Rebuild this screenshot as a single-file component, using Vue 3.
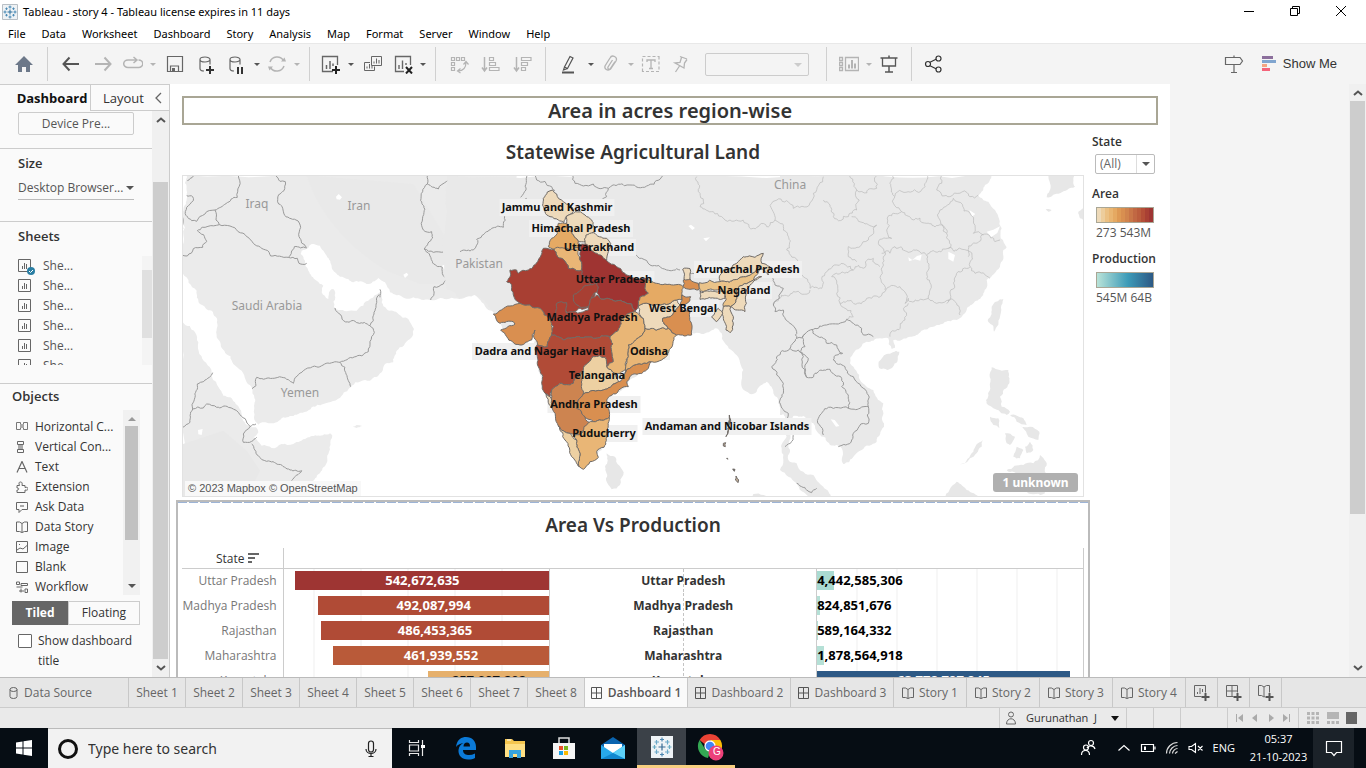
<script setup>
import { h, ref } from 'vue'

/* Icon set: each icon is [width, height, [[path, fill, stroke, strokeWidth], ...]] */
const D = '#555'
const L = '#b4b4b4'
const cyl = 'M3 5.5a5 2.5 0 0 1 10 0v5M3 5.5a5 2.5 0 0 0 10 0M3 5.5v9a4 2.5 0 0 0 4 2.5'
const icons = {
  logo: [16, 16, [['M.5.5h15v15H.5z', '#eef2f5', '#b8bfc5', 1], ['M8 5.5v5M5.5 8h5', 'none', '#2a6f9c', 1], ['M8 1.5v3M6.5 3h3M8 11.5v3M6.5 13h3M3 6.5v3M1.5 8h3M13 6.5v3M11.5 8h3M4.5 3.5v2.4M3.3 4.7h2.4M11.5 3.5v2.4M10.3 4.7h2.4M4.5 10v2.4M3.3 11.2h2.4M11.5 10v2.4M10.3 11.2h2.4', 'none', '#4a8ab5', 1]]],
  home: [20, 20, [['M10 2 19 11h-3v7h-4v-5H8v5H4v-7H1z', '#6c7889', 'none', 0]]],
  back: [20, 20, [['M2.5 10H18M8.5 3.5 2.5 10l6 6.5', 'none', D, 2]]],
  fwd: [20, 20, [['M2 10h15.5M11.5 3.5l6 6.5-6 6.5', 'none', L, 2]]],
  loop: [20, 20, [['M15.5 6a4 3.5 0 0 1 0 7.5H5a4 3.5 0 0 1 0-7.5h8.5M10.5 3l3.5 3-3.5 3', 'none', L, 1.5]]],
  save: [20, 20, [['M2.5 2.5h15v15h-15zM5.5 17v-5h8v5', 'none', '#666', 1.2], ['M7 14h3v3H7z', '#666', 'none', 0]]],
  dsAdd: [20, 20, [[cyl, 'none', '#666', 1.2], ['M13 12v8M9 16h8', 'none', '#333', 2]]],
  dsPause: [20, 20, [[cyl, 'none', '#666', 1.2], ['M11 13v7M15 13v7', 'none', '#333', 2]]],
  refresh: [20, 20, [['M3 8a7.5 7.5 0 0 1 13.5-1.5M17 12a7.5 7.5 0 0 1-13.5 1.5', 'none', L, 1.5], ['M14 7.5h5l-1.5-4zM6 12.5H1l1.5 4z', L, 'none', 0]]],
  wsAdd: [20, 20, [['M12 17.5H1.5v-15h15V11', 'none', '#666', 1.3], ['M5.5 15v-4M9 15V7M12 12V9.5', 'none', '#666', 1.5], ['M15 12v8M11 16h8', 'none', '#222', 2]]],
  dup: [20, 20, [['M8.5 2.5h10v9h-10zM7 8.5H1.5v8h10v-4', 'none', '#666', 1], ['M11 9.5v-2M13.5 9.5v-5M16 9.5V6M4 14.5v-2M6.5 14.5V10M9 14.5v-3', 'none', '#666', 1]]],
  clear: [20, 20, [['M11 17.5H2.5v-15h15V11', 'none', '#666', 1.3], ['M6 15v-4M9.5 15V6.5M13 11V9', 'none', '#666', 1.4], ['m13 13 6 6.5M19 13l-6 6.5', 'none', '#222', 2]]],
  swap: [20, 20, [['M2.5 3.5h3v3h-3zM7.5 3.5h3v3h-3zM12.5 3.5h3v3h-3zM2.5 8.5h3v3h-3zM2.5 13.5h3v3h-3z', 'none', L, 1.2], ['M17 8c0 6-3 9-8 9M14.5 10.5 17 7.5l2.5 3M11.5 14.5l-3 2.5 3 2', 'none', L, 1.2]]],
  asc: [20, 20, [['M3.5 3v14M1 13.5 3.5 17 6 13.5', 'none', L, 1.5], ['M8.5 3.5h4v3h-4zM8.5 8.5h6v3h-6zM8.5 13.5h9.5v3H8.5z', 'none', L, 1.2]]],
  desc: [20, 20, [['M3.5 3v14M1 13.5 3.5 17 6 13.5', 'none', L, 1.5], ['M8.5 3.5H18v3H8.5zM8.5 8.5h6v3h-6zM8.5 13.5h4v3h-4z', 'none', L, 1.2]]],
  marker: [20, 20, [['M11 2.5 14 4 8.5 14.5l-3-1.5zM5.5 13 4.5 16l4-1.5', 'none', D, 1.2], ['M3 18.5h12', 'none', D, 2]]],
  clip: [20, 20, [['M14 7.5 9 15a3 3 0 0 1-5-3l5-8a3 3 0 0 1 6 3l-5 7.5a1.5 1.5 0 0 1-3-1.5l4.5-7', 'none', L, 1.3]]],
  textBox: [20, 20, [['M1.5 2.5h3M6.5 2.5h3M11.5 2.5h3M16.5 2.5h1.5v3M18 7.5v3M18 12.5v3M18 17.5h-3M13 17.5h-3M8 17.5H5M3 17.5H1.5v-3M1.5 12.5v-3M1.5 7.5v-3', 'none', L, 1.2], ['M6 8V6h8v2M10 6v8.5M8 14.5h4', 'none', L, 1.3]]],
  pin: [20, 20, [['M9 2.5 16 5M10.5 3.5 9 8.5 4 9l9 5 .5-5L16 5.5M8.5 12 4.5 18', 'none', L, 1.3]]],
  cards: [20, 20, [['M.5 3.5h3v3h-3zM.5 8.5h3v3h-3zM.5 13.5h3v3h-3zM6.5 3.5h13v13h-13z', 'none', L, 1.3], ['M10 14.5v-4M13 14.5V6M16 14.5v-5', 'none', L, 2]]],
  present: [20, 20, [['M1.5 4h17M10 1.5V4M10 12v6M6 18h8', 'none', D, 1.5], ['M3.5 4v8h13V4', 'none', D, 1.3]]],
  share: [20, 20, [['M5.5 8.5 12.5 5M5.5 11.5l7 3.5', 'none', '#333', 1.2], ['M1.5 10a2.5 2.5 0 1 0 5 0 2.5 2.5 0 1 0-5 0M12 4.5a2.5 2.5 0 1 0 5 0 2.5 2.5 0 1 0-5 0M12 15.5a2.5 2.5 0 1 0 5 0 2.5 2.5 0 1 0-5 0', '#f4f4f4', '#333', 1.2]]],
  sign: [20, 20, [['M1.5 3.5H16l2.5 3.500-2.500 3.500H1.500zM10 1.500v2M10 10.500v8M7 18.500h6', 'none', '#666', 1.2]]],
  showMe: [16, 16, [['M1 0h11v3H1z', '#8c6f9c', 'none', 0], ['M1 4h14v3H1z', '#80a5cf', 'none', 0], ['M1 8h5v3H1z', '#f4a582', 'none', 0], ['M1 12h8v3H1z', '#f4647a', 'none', 0]]],
  min: [12, 12, [['M1 6.5h10', 'none', '#000', 1]]],
  restore: [12, 12, [['M1.5 3.5h7v7h-7zM3.5 3.5v-2h7v7h-2', 'none', '#000', 1]]],
  close: [12, 12, [['m1 1 10 10M11 1 1 11', 'none', '#000', 1]]],
  up: [10, 6, [['m1 5 4-3.5L9 5', 'none', D, 2]]],
  down: [10, 6, [['m1 1 4 3.5L9 1', 'none', D, 2]]],
  tri: [8, 4, [['M0 0h8L4 4z', D, 'none', 0]]],
  triBlack: [8, 5, [['M0 0h8L4 5z', '#111', 'none', 0]]],
  triUp: [8, 4, [['M0 4h8L4 0z', '#999', 'none', 0]]],
  collapse: [8, 12, [['M7 1 2 6l5 5', 'none', '#666', 1.3]]],
  sheet: [14, 14, [['M.5.5h12v12H.5z', 'none', '#666', 1], ['M4.5 10V7M6.5 10V4M8.500 10V5', 'none', '#666', 1]]],
  check: [8, 8, [['M0 4a4 4 0 1 0 8 0 4 4 0 1 0-8 0', '#2a7ea3', 'none', 0], ['m2 4 1.5 1.5L6 3', 'none', '#fff', 1]]],
  hCont: [12, 12, [['M.5 1.5h4v7h-4zM7.5 1.5h4v7h-4z', 'none', '#777', 1], ['M4 3h4v4H4z', '#aaa', 'none', 0]]],
  vCont: [12, 12, [['M1.5.5h6v3h-6zM1.5 8.5h6v3h-6z', 'none', '#666', 1], ['M2 4h5v4H2z', '#aaa', 'none', 0]]],
  aText: [12, 12, [['M1 11.5 6 .5l5 11M3 7.5h6', 'none', '#666', 1.2]]],
  puzzle: [12, 12, [['M1 4.5h2.5C2.5 2 3 1 4.5 1S6.5 2 6 4.5h3v2c2-.5 3 0 3 1.2S11 9.5 9 9v2.5H1V9c2 .5 2.5-2.5 0-2z', 'none', '#666', 1]]],
  ask: [12, 12, [['M.5 1.5h11v7H6l-3 3v-3H.5z', 'none', '#666', 1], ['M4 4h4v2H4z', '#aaa', 'none', 0]]],
  book: [12, 12, [['M.5 1h3L6 2.500 8.500 1h3v9.500h-3L6 11.500 3.500 10.500h-3zM6 2.500v9', 'none', '#666', 1]]],
  image: [12, 12, [['M.5.5h11v11H.5z', 'none', '#666', 1], ['m1 9 3-2 3 1 4-3.5M3 3.5h1', 'none', '#666', 1]]],
  blank: [12, 12, [['M.5.5h11v11H.5z', 'none', '#666', 1]]],
  flow: [12, 12, [['M.5 1h3v2.5h-3zM5 2.5h6.5v2H5zM.5 6h6M3 10h5M9 8h2.5v3.500H9zM5 7.5v4', 'none', '#666', 1]]],
  grid: [12, 12, [['M.5.5h10v11H.5zM5.5 1v10M.5 6h10', 'none', '#555', 1]]],
  data: [10, 12, [['M1 2.5a3.5 2 0 0 1 7 0v7a3.5 2 0 0 1-7 0zM1 2.5a3.5 2 0 0 0 7 0', 'none', '#666', 1]]],
  newSheet: [18, 18, [['M8.5 12.5h-7v-11h11v7', 'none', '#666', 1], ['M4.5 10V8M7 10V4M9.5 8V5', 'none', '#666', 1], ['M12.5 9v8M8.5 13h8', 'none', D, 2]]],
  newDash: [18, 18, [['M8.5 12.5h-7v-11h11v7M7 1.5v11M1.5 7h11', 'none', '#666', 1], ['M12.5 9v8M8.5 13h8', 'none', D, 2]]],
  newStory: [18, 18, [['M8 12.500 7 13l-2.500-1.500h-3v-10h3L7 3l2.500-1.500h3v7M7 3v9.500', 'none', '#666', 1], ['M12.5 9v8M8.5 13h8', 'none', D, 2]]],
  user: [12, 14, [['M3.5 3.5a2.5 2.5 0 1 0 5 0 2.5 2.5 0 1 0-5 0M1.5 13c0-7 9-7 9 0z', 'none', '#666', 1]]],
  sort: [12, 10, [['M0 1h11M0 5h7M0 9h4', 'none', '#666', 2]]],
  first: [8, 8, [['M0 0h1v8H0zM7 0v8L2 4z', '#aaa', 'none', 0]]],
  prev: [8, 8, [['M6 0v8L1 4z', '#aaa', 'none', 0]]],
  next: [8, 8, [['M2 0v8l5-4z', '#aaa', 'none', 0]]],
  last: [8, 8, [['M7 0h1v8H7zM1 0v8l5-4z', '#aaa', 'none', 0]]],
  tiles: [12, 12, [['M0 0h3v3H0zM4.5 0h3v3h-3zM9 0h3v3H9zM0 4.5h3v3H0zM4.5 4.5h3v3h-3zM9 4.5h3v3H9zM0 9h3v3H0zM4.5 9h3v3h-3zM9 9h3v3H9z', '#b5b5b5', 'none', 0]]],
  strip: [12, 12, [['M0 0h12v7H0zM0 9h3v3H0zM4.5 9h3v3h-3zM9 9h3v3H9z', '#b5b5b5', 'none', 0]]],
  full: [12, 12, [['M0 0h11v12H0z', '#666', 'none', 0]]],
  win: [18, 18, [['M1 3.5 7.5 2.5v6H1zM8.500 2.300 17 1v7.500H8.500zM1 9.500h6.500v6L1 14.500zM8.500 9.500H17V17l-8.500-1.300z', '#fff', 'none', 0]]],
  cortana: [22, 22, [['M2.5 11a8.500 8.500 0 1 0 17 0 8.500 8.500 0 1 0-17 0', 'none', '#111', 3]]],
  mic: [14, 18, [['M4.5 3.5a2.5 2.5 0 0 1 5 0v6a2.5 2.5 0 0 1-5 0zM2 9c0 6 10 6 10 0M7 13.5V17M4.5 16.5h5', 'none', '#222', 1.2]]],
  task: [18, 18, [['M1.5 1v2.5h9V1M1.5 6h9v6h-9zM1.5 17v-2.5h9V17M14.5 1v16', 'none', '#e8e8e8', 1.2], ['M13 6h4v3h-4z', '#fff', 'none', 0]]],
  edge: [24, 24, [['M2 11C3 3 8 1 12 1c6 0 10 4 10 10v3H9c0 4 3 5 6 5 2 0 4-.5 6-1.5v4.5c-2 1-4 1.5-7 1.5-6 0-10-4-9.5-9.5C5 10 7 8 9.5 7 6.5 7.3 4 8.5 2 11zM9.5 10.500H16C16 8 15 6.500 13 6.500S9.500 8 9.500 10.500z', '#0b7ad8', 'none', 0]]],
  files: [24, 24, [['M2 3h7l2 2h11v16H2z', '#f5c64f', 'none', 0], ['M2 8h20v13H2z', '#ffdf83', 'none', 0], ['M6 22v-8h12v8h-4v-4h-4v4z', '#36a3de', 'none', 0], ['M4 4h4', 'none', '#fff', 1]]],
  store: [24, 24, [['M7 7V2h10v5', 'none', '#ddd', 1.5], ['M1 7h22v16H1z', '#f5f5f5', 'none', 0], ['M7 10h4v4H7z', '#e8502a', 'none', 0], ['M12 10h4v4h-4z', '#7ab51d', 'none', 0], ['M7 15h4v4H7z', '#18a0e4', 'none', 0], ['M12 15h4v4h-4z', '#fab800', 'none', 0]]],
  mail: [26, 24, [['M1 9 13 1l12 8v14H1z', '#0a64b0', 'none', 0], ['M4 8h18v9H4z', '#fff', 'none', 0], ['M1 9v14h24V9l-12 8z', '#27a8ea', 'none', 0], ['m25 9-12 8 12 6z', '#5cd0f8', 'none', 0], ['M13 17 1 23h24z', '#1187cf', 'none', 0]]],
  tableau: [24, 24, [['M1 1h22v22H1z', '#eef3f6', 'none', 0], ['M12 8.5v7M8.5 12h7', 'none', '#376b93', 1.2], ['M12 2.5v4M10 4.5h4M12 17.5v4M10 19.5h4', 'none', '#4b86b0', 1.2], ['M4.5 10v4M2.5 12h4M19.5 10v4M17.5 12h4', 'none', '#68acc5', 1.2], ['M6.5 5v4.5M4.5 7h4.5M17.5 5v4.5M15 7h4.5M6.5 14.5V19M4.5 17h4.5M17.5 14.5V19M15 17h4.5', 'none', '#6ba8c8', 1.2]]],
  chrome: [28, 28, [['M13 1a12 12 0 0 1 10.4 6H13L7.5 11 2.6 7A12 12 0 0 1 13 1z', '#ea4335', 'none', 0], ['M2.6 7 8 16l5 3-2 6A12 12 0 0 1 2.6 7z', '#34a853', 'none', 0], ['M23.4 7H13l5 5v6l-5 7A12 12 0 0 0 23.4 7z', '#fbbc05', 'none', 0], ['M8 13a5 5 0 1 0 10 0 5 5 0 1 0-10 0', '#4285f4', '#fff', 1.3], ['M11.5 20a7.5 7.5 0 1 0 15 0 7.5 7.5 0 1 0-15 0', '#ec407a', 'none', 0]]],
  people: [18, 18, [['M8.5 4a2.5 2.5 0 1 0 5 0 2.5 2.5 0 1 0-5 0M7 9c1-3 7-3 8 1M3.5 8.5a2.5 2.5 0 1 0 5 0 2.5 2.5 0 1 0-5 0M1.5 16c0-6 8-6 8 0', 'none', '#fff', 1.2]]],
  trayUp: [14, 14, [['m1.5 9.5 5.5-5 5.5 5', 'none', '#fff', 1.2]]],
  battery: [16, 12, [['M1.5 2.5h12v7h-12zM15 4.5v3', 'none', '#fff', 1.2], ['M4 4.5h2v3.5H4z', '#fff', 'none', 0]]],
  wifi: [14, 14, [['M1.5 12.5c0-6 5-11 11-11M4.5 12.5c0-4 4-8 8-8M7.5 12.5c0-2.5 2.5-5 5-5M10 12.5l2.5-2', 'none', '#ddd', 1.2]]],
  mute: [16, 12, [['M1 4.5h2.5l4-3v9l-4-3H1zM10 4l4.5 4.5M14.5 4 10 8.5', 'none', '#fff', 1.1]]],
  note: [18, 18, [['M1.5 2.5h15v11h-5l-2.5 3-2.5-3h-5z', 'none', '#fff', 1.2]]]
}
const Glyph = (p) => {
  const [w, ht, parts] = icons[p.name]
  return h('svg', { width: w, height: ht, viewBox: `0 0 ${w} ${ht}`, 'aria-hidden': 'true' },
    parts.map(([d, fill, stroke, sw]) => h('path', { d, fill, stroke, 'stroke-width': sw })))
}
Glyph.props = ['name']

const menus = ['File', 'Data', 'Worksheet', 'Dashboard', 'Story', 'Analysis', 'Map', 'Format', 'Server', 'Window', 'Help']
const toolGroups = [
  [['back', 'Undo'], ['fwd', 'Redo'], ['loop', 'Replay', 1], ['save', 'Save'], ['dsAdd', 'New data source'], ['dsPause', 'Pause updates', 1], ['refresh', 'Refresh', 1]],
  [['wsAdd', 'New worksheet', 1], ['dup', 'Duplicate'], ['clear', 'Clear sheet', 1]],
  [['swap', 'Swap'], ['asc', 'Sort ascending'], ['desc', 'Sort descending']]
]
const faded = ['loop', 'refresh', 'clip', 'cards']
const sheets = [1, 2, 3, 4, 5, 6]
const objects = [['hCont', 'Horizontal C...'], ['vCont', 'Vertical Con...'], ['aText', 'Text'], ['puzzle', 'Extension'], ['ask', 'Ask Data'], ['book', 'Data Story'], ['image', 'Image'], ['blank', 'Blank'], ['flow', 'Workflow']]
const showTitle = ref(false)

const rows = [
  { s: 'Uttar Pradesh', a: '542,672,635', w: 95.5, c: '#9e3533', p: '4,442,585,306', pw: 6.5, pc: '#aadbd2' },
  { s: 'Madhya Pradesh', a: '492,087,994', w: 87, c: '#b04b36', p: '824,851,676', pw: 1, pc: '#b5e0d6' },
  { s: 'Rajasthan', a: '486,453,365', w: 86, c: '#b04b36', p: '589,164,332', pw: .5, pc: '#b5e0d6' },
  { s: 'Maharashtra', a: '461,939,552', w: 81.5, c: '#b95a39', p: '1,878,564,918', pw: 2.5, pc: '#b5e0d6' },
  { s: 'Karnataka', a: '257,097,202', w: 45.5, c: '#e6b06c', dark: true, p: '63,772,797,945', pw: 95, pc: '#2d5985', big: true }
]
const areaSwatches = ['#eedab9', '#edcd9c', '#ebc083', '#e9b571', '#e5a962', '#de9a55', '#d88f50', '#d0844d', '#c97648', '#c16843', '#bb5d3d', '#b44e37', '#a94034', '#9e3533']

/* Splits every segment of a polyline with a repeatable offset so that shared edges meet. */
function jag(text, closed, rough = 0.16) {
  const n = text.trim().split(/[ ,]+/).map(Number)
  const pts = []
  for (let i = 0; i < n.length; i += 2) pts.push([n[i], n[i + 1]])
  if (closed) pts.push(pts[0])
  const out = [pts[0]]
  const split = (a, b, depth) => {
    const len = Math.hypot(b[0] - a[0], b[1] - a[1])
    if (len < 9 || depth > 3) { out.push(b); return }
    const seed = Math.sin((a[0] + b[0]) * 12.9 + (a[1] + b[1]) * 78.2) * 43758.5
    const k = (seed - Math.floor(seed) - 0.5) * Math.min(len, 40) * rough * 2
    const flip = a[0] < b[0] || (a[0] === b[0] && a[1] < b[1]) ? 1 : -1
    const m = [(a[0] + b[0]) / 2 - (b[1] - a[1]) / len * k * flip, (a[1] + b[1]) / 2 + (b[0] - a[0]) / len * k * flip]
    split(a, m, depth + 1)
    split(m, b, depth + 1)
  }
  for (let i = 1; i < pts.length; i++) split(pts[i - 1], pts[i], 0)
  return 'M' + out.map((q) => q[0].toFixed(1) + ' ' + q[1].toFixed(1)).join('L') + (closed ? 'Z' : '')
}

const westLand = [
  '20,274 1010,274 1010,760 960,700 945,685 925,678 905,655 890,632 860,638 800,646 750,648 700,640 650,634 630,625 615,595 595,582 560,600 520,595 505,585 480,578 455,550 440,515 420,485 395,480 385,492 365,500 362,510 375,530 385,560 410,590 430,605 425,625 445,645 450,620 460,615 466,640 462,668 475,678 500,682 530,680 550,665 570,645 600,625 605,655 620,675 655,690 685,705 702,735 690,765 650,800 640,835 615,840 605,865 570,890 515,905 485,935 430,960 395,970 350,992 310,1000 270,1018 235,1022 222,1000 218,930 215,910 185,860 160,840 110,760 112,720 95,680 60,660 50,620 8,568 8,385 18,360 20,320',
  '8,714 45,745 55,775 58,810 95,865 110,900 130,935 165,955 185,990 205,1025 228,1030 235,1045 220,1060 245,1085 275,1092 305,1080 340,1080 380,1062 450,1048 457,1055 445,1110 430,1150 410,1180 390,1215 370,1242 8,1242',
  '518,1028 530,1023 547,1026 530,1032'
]
const westLines = [
  '175,274 172,340 105,378 50,412 35,410 20,395', '105,378 108,408 118,422 52,440 80,472 68,490 40,494 22,516 8,514', '118,422 150,426 200,458 272,516 325,520 352,523 357,538 380,538', '325,520 343,488 380,492',
  '288,274 300,292 316,293 312,320 296,332 296,360 312,390 348,408 362,430 357,458 380,490', '742,274 742,300 722,350 732,385 730,438 755,443 758,462 733,495 760,505 826,510 886,493 890,460 930,440 960,432', '742,300 775,315 800,292 838,274',
  '733,495 748,510 757,532 787,550 790,575 800,585 790,600 762,608 752,648', '465,672 497,714 570,725 583,745 565,803 480,835 398,848 370,860 340,898 325,887 240,884 230,880 228,905 216,914', '480,835 512,908', '570,725 582,690 590,650 598,632', '600,616 600,640',
  '98,866 88,880 52,900 45,940 36,962 38,975 30,1015 8,1030', '38,975 70,972 80,960 110,970 145,970 175,985 210,1028 228,1020', '210,1028 190,1050 190,1075 215,1072 230,1060', '215,1080 235,1115 260,1132 330,1158 365,1160 335,1190', '8,400 8,435', '22,290 40,276', '20,335 38,338 40,350 20,370 18,395'
]
const eastLand = [
  '-40,15 1140,15 1140,735 1000,738 995,780 985,820 985,870 1010,880 1030,905 1060,915 1090,950 1115,985 1060,985 1035,970 1010,940 985,920 960,900 970,870 965,840 980,800 975,740 955,700 940,670 920,635 890,665 870,672 845,650 850,600 820,545 795,520 785,490 765,475 725,492 695,490 650,495 632,535 570,575 500,650 440,690 445,750 432,832 365,895 300,770 270,680 235,590 225,500 180,525 130,480 105,430 90,415 75,395 45,375 0,385 -40,360',
  '960,15 1595,15 1575,45 1555,75 1585,95 1605,120 1625,175 1622,205 1640,232 1630,240 1620,290 1580,330 1570,370 1520,420 1490,450 1420,470 1350,500 1300,510 1305,533 1295,537 1285,505 1260,505 1220,515 1180,550 1170,580 1200,630 1240,660 1270,700 1272,770 1250,815 1205,840 1150,882 1145,835 1110,825 1075,790 1060,760 1030,738 960,735',
  '440,850 465,860 490,915 480,945 455,958 438,930 435,890', '1256,575 1280,552 1318,545 1312,575 1282,600 1258,595', '1630,387 1620,440 1602,485 1583,450 1595,410 1620,388',
  '1595,592 1645,600 1648,640 1620,680 1625,710 1650,725 1640,735 1600,715 1578,690 1590,650', '1765,15 1845,15 1845,50 1800,70 1760,82 1770,40', '1450,985 1490,935 1520,960 1560,985', '1500,885 1540,845 1568,810 1565,830 1530,865', '1590,740 1615,745 1618,775 1600,765', '1635,790 1665,800 1650,825 1640,820', '1640,900 1690,885 1720,880 1740,855 1758,875 1760,920 1755,970 1700,965 1680,920', '1680,765 1710,770 1738,785 1735,810 1705,800', '1650,735 1690,745 1700,765 1670,755', '1670,830 1690,840 1680,865 1660,860', '1710,815 1720,840 1700,850 1695,830', '1855,125 1868,115 1870,150 1860,145', '1757,118 1775,120 1765,125', '870,985 880,972 940,985'
]
const eastLines = [
  '200,15 198,60 182,82', '0,245 40,240 50,208 80,185 95,175 130,172 140,130 200,85', '225,15 230,30 275,50 285,62', '338,15 345,40 370,48 400,42 445,55 440,80 400,100', '445,55 510,45 560,48 600,28 610,15', '450,220 500,245 545,265 570,285 620,300 660,300', '690,310 760,315 785,325', '925,315 945,345 970,355 958,385 940,405 945,425 970,420 990,460 1010,485 1010,505 990,535 950,560 935,590 950,615 970,640 970,670 960,690 985,730 990,760 1000,790 975,830',
  '1010,505 1035,492 1060,478 1100,465 1135,462 1160,448 1180,460 1205,475 1210,495 1240,500', '1055,478 1090,505 1100,520 1130,525 1148,550 1120,570 1155,590 1180,620 1220,665 1225,710 1225,760 1180,790 1175,810 1135,830', '1035,492 1030,515 1035,530 1020,545 1045,565 1040,622 1075,605 1110,598 1145,625 1145,650 1165,680 1165,715 1200,715 1225,710', '1165,715 1105,712 1075,745 1090,795', '1010,940 1025,950 1040,960 1055,968 1070,955', '990,535 1015,540 1030,560 1040,622'
]
const provinces = [
  '710,20 720,110 760,125 810,150 860,160 880,175 920,170 945,150 935,100 980,92 1000,115 1050,98 1060,70 1090,20', '945,150 970,170 980,240 1015,280 1020,310 1050,355 1085,355 1095,310 1130,285 1180,300 1240,265 1260,290', '1090,90 1110,105 1120,140 1165,140 1190,120 1190,60 1160,15', '1190,60 1250,55 1250,15', '1300,15 1305,80 1325,125 1300,130 1280,180 1295,205 1255,220 1270,260 1275,360', '1305,78 1395,50 1400,15', '1325,125 1355,148 1400,160 1460,190 1465,235 1400,255 1370,240 1305,230 1265,250', '1175,140 1250,165 1225,210 1200,230 1165,230 1165,260 1190,275', '1400,255 1405,300 1410,360 1405,385 1345,385 1335,400 1320,350 1275,365 1220,385 1140,400 1130,340 1115,320 1180,300', '1140,400 1155,415 1180,440 1160,448', '1345,400 1335,450 1290,500', '1405,385 1430,400 1490,400 1500,435', '1460,400 1490,310 1530,290 1530,245 1465,235', '1530,290 1545,310 1590,325', '1525,260 1565,195 1620,210', '1460,190 1440,150 1440,120 1480,85 1530,130 1540,190 1570,195', '1430,60 1470,80 1530,80 1555,75', '1430,60 1450,15', '940,405 1000,365 1050,360'
]
const states = [
  ['#eedabb', '250,85 262,66 278,60 290,72 310,95 330,105 340,125 320,138 312,158 295,150 270,140 255,125'],
  ['#eedabb', '320,138 345,125 375,135 395,150 405,185 385,195 375,215 355,215 340,195 320,160'],
  ['#eedabb', '378,195 400,188 440,205 452,220 445,245 440,272 420,262 400,245 375,220'],
  ['#e5aa64', '295,160 320,160 340,195 355,215 358,235 330,240 290,238 265,230 275,205 292,190'],
  ['#e9b676', '282,238 330,240 358,235 360,270 365,300 350,302 325,295 310,268 290,255'],
  ['#a83f33', '250,235 282,238 290,255 310,268 325,295 350,302 365,300 385,330 410,345 405,370 395,410 320,430 300,400 285,440 270,450 240,415 210,405 180,400 160,375 155,345 140,335 150,300 170,300 175,310 205,300 235,270'],
  ['#9f3432', '358,225 378,222 400,245 440,272 470,290 510,318 555,325 555,355 565,370 540,382 535,408 525,425 515,402 460,392 420,385 400,350 370,320 365,300 360,270'],
  ['#a83f33', '340,375 370,350 410,338 412,365 395,380 390,410 350,405 340,390'],
  ['#ab4133', '270,450 285,440 290,400 320,398 320,430 385,420 390,390 410,375 420,385 460,392 515,402 525,425 495,440 480,470 462,490 450,500 400,505 350,500 310,510 275,495 280,470'],
  ['#d98f50', '100,432 150,408 180,400 210,405 240,415 270,450 275,495 262,530 232,525 225,480 215,510 180,525 140,500 122,480 165,462 160,455 120,460'],
  ['#b14b37', '262,530 275,495 310,510 350,500 400,505 450,500 455,545 460,575 440,590 435,562 400,560 370,600 365,605 340,640 300,640 275,660 270,680 255,670 245,640 240,600 232,560 232,525'],
  ['#eedabb', '258,672 270,680 275,712 268,705'],
  ['#cd8450', '275,660 300,640 340,640 365,605 370,672 355,690 350,715 375,740 395,765 370,780 360,795 330,790 295,768 275,710'],
  ['#edd0a2', '370,600 400,560 435,562 440,590 465,610 480,638 470,638 430,660 370,672'],
  ['#d98f50', '370,672 430,660 470,638 495,610 515,590 575,575 560,600 500,635 505,650 470,670 440,690 440,710 448,742 400,755 375,740 350,715 355,690'],
  ['#e9b676', '400,755 448,742 440,790 432,832 410,845 415,862 390,875 370,898 358,890 360,850 350,810 340,795 370,785 372,770'],
  ['#edd0a2', '295,768 330,790 350,810 360,850 358,890 335,860 315,810'],
  ['#e9b676', '495,440 525,425 550,445 555,475 540,500 505,525 505,560 500,595 480,610 465,610 440,590 460,575 455,545 450,500 462,490 480,470'],
  ['#e9b676', '555,475 590,480 625,475 650,495 632,535 605,570 575,575 515,590 495,610 505,560 505,525 540,500'],
  ['#eedabb', '535,408 600,405 650,390 660,405 640,430 608,445 625,475 590,480 555,475 550,445'],
  ['#e5aa64', '555,325 590,340 640,345 670,350 665,390 650,390 600,405 535,408 540,382 565,370 555,355'],
  ['#d98f50', '670,330 690,327 715,340 715,360 690,358 670,350'],
  ['#d98f50', '665,375 692,380 690,392 660,405 672,422 690,425 695,495 650,495 625,475 608,445 640,430 660,405'],
  ['#eedabb', '668,298 690,296 690,327 672,328'],
  ['#eac389', '718,338 780,335 850,320 895,290 880,330 830,360 825,400 812,410 790,410 795,365 720,365'],
  ['#eedabb', '780,335 790,300 830,280 850,260 885,262 910,250 905,280 930,290 925,315 895,290 850,320'],
  ['#eedabb', '720,368 795,368 795,385 720,388'],
  ['#eedabb', '830,360 880,330 905,320 870,345 858,375 855,425 812,410 825,400'],
  ['#eedabb', '790,410 812,410 820,440 810,488 798,480 790,440'],
  ['#eedabb', '755,440 775,415 788,430 770,455'],
  ['#776b5f', '808,735 812,750 805,785 798,800 802,760'], ['#c0ad98', '790,820 797,818 796,830 790,828'], ['#c0ad98', '828,918 836,930 834,938 826,930'], ['#555555', '818,897 825,898 823,904'], ['#555555', '800,865 803,865 803,868']
]
const stateLabels = [
  ['Jammu and Kashmir', 557, 207, 115], ['Himachal Pradesh', 581, 228, 104], ['Uttarakhand', 599, 247, 74], ['Uttar Pradesh', 614, 279, 81], ['Arunachal Pradesh', 748, 269, 108], ['Nagaland', 744, 290, 56], ['West Bengal', 683, 308, 73], ['Madhya Pradesh', 592, 317, 96], ['Dadra and Nagar Haveli', 540, 351, 136], ['Odisha', 649, 351, 42], ['Telangana', 597, 375, 60], ['Andhra Pradesh', 594, 404, 93], ['Andaman and Nicobar Islands', 727, 426, 169], ['Puducherry', 604, 433, 67]
]
const countryLabels = [['Iraq', 257, 204], ['Iran', 359, 206], ['Pakistan', 479, 264], ['Saudi Arabia', 267, 306], ['Yemen', 300, 393], ['China', 790, 185]]
const books = [['grid', 'Dashboard 2', 'd'], ['grid', 'Dashboard 3', 'd'], ['book', 'Story 1', 's'], ['book', 'Story 2', 's'], ['book', 'Story 3', 's'], ['book', 'Story 4', 's']]
</script>

<template>
  <div class="app">
    <header class="titlebar">
      <Glyph name="logo" /><span class="caption">Tableau - story 4 - Tableau license expires in 11 days</span>
      <div class="winbtns">
        <button aria-label="Minimize"><Glyph name="min" /></button>
        <button aria-label="Restore"><Glyph name="restore" /></button>
        <button aria-label="Close"><Glyph name="close" /></button>
      </div>
    </header>
    <nav class="menubar"><button v-for="m in menus" :key="m">{{ m }}</button></nav>

    <div class="toolbar">
      <button class="home" aria-label="Home"><Glyph name="home" /></button>
      <div v-for="(g, i) in toolGroups" :key="i" class="group">
        <template v-for="t in g" :key="t[0]">
          <button class="tool" :class="{ slim: t[2] }" :aria-label="t[1]"><Glyph :name="t[0]" /></button>
          <button v-if="t[2]" class="caret" :class="{ faded: faded.includes(t[0]) }" :aria-label="t[1] + ' options'"></button>
        </template>
      </div>
      <div class="group">
        <button class="tool" aria-label="Highlight"><Glyph name="marker" /></button><button class="caret" aria-label="Highlight options"></button>
        <button class="tool slim" aria-label="Group"><Glyph name="clip" /></button><button class="caret faded" aria-label="Group options"></button>
        <button class="tool slim" aria-label="Show mark labels"><Glyph name="textBox" /></button>
        <button class="tool" aria-label="Fix axes"><Glyph name="pin" /></button>
        <div class="fit"><select aria-label="Fit" disabled></select><i class="arrow"></i></div>
      </div>
      <div class="group cards">
        <button class="tool slim" aria-label="Show cards"><Glyph name="cards" /></button><button class="caret faded" aria-label="Card options"></button>
        <button class="tool slim" aria-label="Presentation mode"><Glyph name="present" /></button>
      </div>
      <button class="tool share" aria-label="Share"><Glyph name="share" /></button>
      <button class="tool guide" aria-label="Guide"><Glyph name="sign" /></button>
      <button class="showme"><Glyph name="showMe" />Show Me</button>
    </div>

    <main class="work">
      <aside class="pane">
        <div class="panetabs"><button class="on">Dashboard</button><button class="lay">Layout<Glyph name="collapse" /></button></div>
        <div class="panebody">
          <div class="panecol">
            <section class="device"><button>Device Pre...</button></section>
            <section class="size">
              <h3><label for="size">Size</label></h3>
              <div class="sizesel"><select id="size"><option>Desktop Browser...</option></select><Glyph name="tri" /></div>
            </section>
            <section class="sheets">
              <h3>Sheets</h3>
              <div class="sheetbox">
                <ul><li v-for="s in sheets" :key="s"><span class="ic"><Glyph name="sheet" /><Glyph v-if="s === 1" name="check" class="badge" /></span>She...</li></ul>
                <div class="minibar"><i></i></div>
              </div>
            </section>
            <section class="objects">
              <h3>Objects</h3>
              <div class="objbox">
                <ul><li v-for="o in objects" :key="o[1]"><Glyph :name="o[0]" />{{ o[1] }}</li></ul>
                <div class="objbar"><Glyph name="triUp" /><i></i><Glyph name="tri" /></div>
              </div>
              <div class="toggle"><button class="on">Tiled</button><button>Floating</button></div>
              <label class="chk"><input v-model="showTitle" type="checkbox"><span>Show dashboard title</span></label>
            </section>
          </div>
          <div class="scroll side"><Glyph name="up" /><i></i><Glyph name="down" /></div>
        </div>
      </aside>

      <div class="canvas">
        <div class="sheet">
          <h1>Area in acres region-wise</h1>
          <div class="cols">
            <div class="viz">
              <h2>Statewise Agricultural Land</h2>
              <div class="map">
                <svg class="mapsvg" viewBox="183 176 900 320" preserveAspectRatio="xMidYMid slice" role="img" aria-label="Map of agricultural land by state">
                  <g transform="translate(180 84) scale(.33333)" stroke-linejoin="round">
                    <path v-for="p in westLand" :key="p" :d="jag(p, true)" fill="#ebebeb" />
                    <path d="M380 274C420 400 520 500 620 560L720 600 850 600 820 500 700 300Z" fill="#e9e9e9" />
                    <path d="M8 1080 130 1040 200 1100 240 1160 200 1240H8Z" fill="#e8e8e8" />
                    <path d="M468 338l8-8 10 10-6 7-10-1zM670 572l10-6 5 6-10 10zM786 545l12-5 8 10-14 6zM54 1038l14-3-3 18-10-2z" fill="#fff" />
                    <path v-for="p in westLines" :key="p" :d="jag(p)" class="border" />
                  </g>
                  <g transform="translate(460 170) scale(.33333)" stroke-linejoin="round">
                    <path v-for="(p, i) in eastLand" :key="p" :d="jag(p, true)" :fill="i < 2 ? '#e9e9e9' : '#e7e7e7'" />
                    <path d="M685 168l8-4 12 10-8 6zM730 205l20-3-12 12zM1345 262l12 8 14-12 14-4-4 18-16-4-18 6zM1465 245l20 10-5 20-15-8zM1528 120l18 12-10 8zM1580 185l20-6 20-10-8 20-18 12zM1112 748l12 2 14 18-10 2z" fill="#fff" />
                    <path v-for="p in provinces" :key="p" :d="jag(p, false, .3)" class="border light" />
                    <path v-for="p in eastLines" :key="p" :d="jag(p, false, .22)" class="border" />
                  </g>
                  <g class="country"><text v-for="c in countryLabels" :key="c[0]" :x="c[1]" :y="c[2] + 4">{{ c[0] }}</text></g>
                  <rect v-for="s in stateLabels" :key="s[0]" :x="s[1] - s[3] / 2" :y="s[2] - 8" :width="s[3]" height="17" fill="#f0f0f0" />
                  <g transform="translate(460 170) scale(.33333)" stroke-linejoin="round">
                    <path v-for="s in states" :key="s[1]" :d="jag(s[1], true)" :fill="s[0]" class="state" />
                  </g>
                  <g class="names"><text v-for="s in stateLabels" :key="s[0]" :x="s[1]" :y="s[2] + 4">{{ s[0] }}</text></g>
                </svg>
                <small>© 2023 Mapbox © OpenStreetMap</small>
                <button class="unknown">1 unknown</button>
              </div>
            </div>
            <aside class="legend">
              <label for="state">State</label>
              <div class="statesel"><select id="state"><option>(All)</option></select><span><Glyph name="tri" /></span></div>
              <h4>Area</h4>
              <div class="ramp"><i v-for="c in areaSwatches" :key="c" :style="{ background: c }"></i></div>
              <p>273 543M</p>
              <h4>Production</h4>
              <div class="ramp prod"></div>
              <p>545M 64B</p>
            </aside>
            <section class="avp">
              <h2>Area Vs Production</h2>
              <table>
                <colgroup><col class="c0"><col><col><col></colgroup>
                <thead><tr><th>State <Glyph name="sort" /></th><th colspan="3"></th></tr></thead>
                <tbody>
                  <tr v-for="r in rows" :key="r.s">
                    <th scope="row">{{ r.s }}</th>
                    <td class="area"><div class="bar" :class="{ dark: r.dark }" :style="{ width: r.w + '%', background: r.c }">{{ r.a }}</div></td>
                    <td class="mid">{{ r.s }}</td>
                    <td class="prodc"><div class="bar" :class="{ big: r.big }" :style="{ width: r.pw + '%', background: r.pc }">{{ r.p }}</div></td>
                  </tr>
                </tbody>
              </table>
            </section>
          </div>
        </div>
        <div class="gutter"></div>
        <div class="scroll main"><Glyph name="up" /><i></i><Glyph name="down" /></div>
      </div>
    </main>

    <nav class="tabs">
      <button class="src"><Glyph name="data" />Data Source</button>
      <button v-for="n in 8" :key="n" class="sh">Sheet {{ n }}</button>
      <button class="d on"><Glyph name="grid" />Dashboard 1</button>
      <button v-for="b in books" :key="b[1]" :class="b[2]"><Glyph :name="b[0]" />{{ b[1] }}</button>
      <button class="new" aria-label="New worksheet"><Glyph name="newSheet" /></button>
      <button class="new" aria-label="New dashboard"><Glyph name="newDash" /></button>
      <button class="new" aria-label="New story"><Glyph name="newStory" /></button>
    </nav>
    <div class="status">
      <button class="user"><Glyph name="user" /><span>Gurunathan&nbsp; J</span><Glyph name="triBlack" /></button>
      <i></i><i></i><i class="wide"></i>
      <div class="pager"><Glyph name="first" /><Glyph name="prev" /><Glyph name="next" /><Glyph name="last" /></div>
      <div class="views"><Glyph name="tiles" /><Glyph name="strip" /><Glyph name="full" /></div>
    </div>

    <footer class="taskbar">
      <button class="start" aria-label="Start"><Glyph name="win" /></button>
      <div class="search"><Glyph name="cortana" /><input type="text" placeholder="Type here to search" aria-label="Search"><Glyph name="mic" /></div>
      <button v-for="a in ['task', 'edge', 'files', 'store', 'mail']" :key="a" class="app-ic" :aria-label="a"><Glyph :name="a" /></button>
      <button class="app-ic active" aria-label="Tableau"><Glyph name="tableau" /></button>
      <button class="app-ic open" aria-label="Chrome"><Glyph name="chrome" /><b>G</b></button>
      <div class="tray">
        <Glyph name="people" class="ppl" /><Glyph name="trayUp" /><Glyph name="battery" /><Glyph name="wifi" /><Glyph name="mute" /><span>ENG</span>
        <time>05:37<br>21-10-2023</time>
      </div>
      <button class="notify" aria-label="Notifications"><Glyph name="note" /></button>
    </footer>
  </div>
</template>

<style>
html, body { overflow: hidden; }
</style>

<style scoped>
* { box-sizing: border-box; }
.app { display: flex; flex-direction: column; height: 100vh; font: 12px/16px "Open Sans", "Noto Sans", sans-serif; color: #333; background: #fff; overflow: hidden; }
button { font: inherit; color: inherit; background: none; border: 0; padding: 0; margin: 0; white-space: nowrap; }
select { appearance: none; font: inherit; color: inherit; background: none; border: 0; padding: 0; margin: 0; }
h1, h2, h3, h4, p, ul { margin: 0; padding: 0; list-style: none; }
svg { display: block; flex: none; }

.titlebar { display: flex; align-items: center; height: 24px; flex: none; padding: 0 2px; gap: 5px; color: #000; }
.caption, .menubar { font: 11px/16px "Noto Sans", sans-serif; }
.winbtns { margin-left: auto; display: flex; align-self: flex-start; }
.winbtns button { width: 46px; height: 21px; display: grid; place-items: center; }
.menubar { display: flex; height: 19px; flex: none; gap: 16px; padding-left: 8px; color: #000; align-items: center; }
.toolbar { display: flex; align-items: center; height: 41px; flex: none; background: #f4f4f4; border-top: 1px solid #e8e8e8; }
.home { width: 48px; height: 34px; display: grid; place-items: center; border-right: 1px solid #d0d0d0; }
.group { display: flex; align-items: center; height: 34px; padding: 0 6px 0 7px; border-right: 1px solid #d0d0d0; }
.tool { width: 32px; height: 30px; display: grid; place-items: center; }
.tool.slim { width: 28px; }
.caret { width: 12px; height: 20px; display: grid; place-items: center; }
.caret::after, .arrow { content: ""; border: 3px solid transparent; border-top-color: #555; border-bottom: 0; }
.caret.faded::after { border-top-color: #b4b4b4; }
.fit { position: relative; width: 104px; height: 23px; margin: 0 11px 0 8px; border: 1px solid #ccc; border-radius: 2px; }
.fit select { width: 100%; height: 100%; }
.arrow { position: absolute; right: 6px; top: 9px; border-width: 4px 4px 0; border-top-color: #ccc; }
.cards { padding: 0 8px; }
.share { margin-left: 6px; }
.guide { margin-left: auto; }
.showme { display: flex; align-items: center; gap: 6px; margin: 0 29px 0 11px; font: 13px/20px "Liberation Sans", Arial, sans-serif; }

.work { display: flex; flex: 1; min-height: 0; }
.pane { width: 170px; flex: none; display: flex; flex-direction: column; background: #fafafa; border-top: 1px solid #ccc; border-right: 1px solid #ccc; }
.panetabs { display: flex; height: 26px; flex: none; font-size: 13px; }
.panetabs .on { width: 90px; padding-left: 14px; font-weight: 700; color: #111; }
.panetabs .lay { flex: 1; display: flex; align-items: center; justify-content: space-between; padding: 0 7px 0 12px; border-left: 1px solid #ccc; border-bottom: 1px solid #ccc; }
.panebody { display: flex; flex: 1; min-height: 0; }
.panecol { flex: 1; min-width: 0; overflow: hidden; }
.panecol section { padding: 0 18px; border-bottom: 1px solid #ccc; }
h3 { font-size: 13px; line-height: 18px; font-weight: 600; }
.panecol .device { height: 38px; padding-top: 1px; }
.device button { width: 100%; height: 23px; border: 1px solid #ccc; color: #555; border-radius: 2px; }
.panecol .size { height: 73px; padding-top: 5px; }
.sizesel { display: flex; align-items: center; margin-top: 5px; height: 23px; border-bottom: 1px solid #bbb; color: #555; }
.sizesel select { flex: 1; width: 60px; }
.panecol .sheets { height: 162px; padding: 5px 0 0 18px; }
.sheetbox { display: flex; margin-top: 11px; height: 109px; overflow: hidden; }
.sheetbox ul { flex: 1; }
.sheetbox li { display: flex; align-items: center; height: 20px; gap: 10px; color: #555; }
.ic { position: relative; width: 15px; }
.badge { position: absolute; left: 9px; top: 8px; }
.minibar { width: 10px; background: #f4f4f4; padding-top: 14px; }
.minibar i { display: block; height: 68px; background: #e0e0e0; }
.panecol .objects { padding: 3px 12px 0; border: 0; }
.objbox { display: flex; margin-top: 5px; height: 185px; overflow: hidden; }
.objbox ul { flex: 1; padding-top: 7px; white-space: nowrap; }
.objbox li { display: flex; align-items: center; gap: 7px; height: 20px; padding-left: 4px; }
.objbar { width: 17px; padding: 7px 0; background: #f1f1f1; display: flex; flex-direction: column; align-items: center; gap: 5px; }
.objbar i { width: 13px; height: 114px; background: #c1c1c1; margin-bottom: auto; }
.toggle { display: flex; margin-top: 6px; height: 24px; }
.toggle button { flex: 1; border: 1px solid #ccc; }
.toggle .on { flex: 0 0 56px; background: #666; border-color: #666; color: #fff; font-weight: 700; }
.chk { display: flex; gap: 6px; padding: 6px 0 0 6px; line-height: 20px; }
.chk input { appearance: none; width: 14px; height: 14px; margin: 3px 0 0; border: 1px solid #666; background: #fff; border-radius: 1px; flex: none; }
.scroll { width: 17px; flex: none; display: flex; flex-direction: column; align-items: center; background: #f0f0f0; }
.scroll i { width: 15px; background: #cdcdcd; }
.side { padding: 6px 0; }
.side i { margin-top: 59px; flex: 1; margin-bottom: 6px; }
.main { padding: 6px 0; }
.main i { height: 71%; margin: 5px 0 auto; }

.canvas { flex: 1; display: flex; min-width: 0; }
.sheet { flex: 1000 1 0; min-width: 0; overflow: hidden; background: #fff; }
.gutter { flex: 179 1 0; background: #f4f4f4; }
h1, h2 { font: 600 20px/26px "Noto Sans", sans-serif; text-align: center; color: #333; }
h1 { height: 29px; margin: 12px 12px 0; border: 2px solid #a9a695; }
.cols { display: grid; grid-template-columns: minmax(0, 1fr) 66px; column-gap: 8px; margin: 0 12px; }
h2 { font-size: 19px; line-height: 50px; height: 50px; padding-top: 2px; }
.map { position: relative; height: 322px; border: 1px solid #e2e2e2; overflow: hidden; }
.mapsvg { width: 100%; height: 100%; }
.border { fill: none; stroke: #999; stroke-width: 3px; }
.light { stroke: #b8b8b8; stroke-width: 2px; }
.state { stroke: #6f6a66; stroke-width: 3px; }
.country { font: 12px "Noto Sans", sans-serif; fill: #999; text-anchor: middle; }
.names { font: 700 11px "Noto Sans", sans-serif; fill: #111; text-anchor: middle; }
.map small { position: absolute; left: 2px; bottom: 0; padding: 0 3px; background: #f8f8f8; font: 11px/15px "Liberation Sans", Arial, sans-serif; color: #555; }
.unknown { position: absolute; right: 5px; bottom: 4px; width: 85px; height: 19px; border-radius: 3px; background: #b0b0b0; color: #fff; font: 700 12px/18px "Noto Sans", sans-serif; }
.legend { padding-top: 9px; white-space: nowrap; }
.legend label, .legend h4 { display: block; font-weight: 600; font-size: 12px; line-height: 16px; }
.statesel { display: flex; margin: 4px 3px 0 3px; height: 20px; border: 1px solid #bbb; border-radius: 2px; color: #666; }
.statesel select { flex: 1; width: 20px; padding-left: 4px; }
.statesel span { width: 18px; display: grid; place-items: center; border-left: 1px solid #ddd; }
.legend h4 { margin-top: 12px; }
.ramp { display: flex; height: 16px; margin: 5px 4px 0; border: 1px solid #a9a695; }
.ramp i { flex: 1; }
.prod { background: linear-gradient(90deg, #b9e3d8, #3c9bb8 55%, #2d5985); }
.legend p { margin: 2px 0 0 4px; color: #555; line-height: 16px; }
.legend p + h4 { margin-top: 10px; }
.avp { margin: 3px -6px 0; border: 2px solid #bbb; padding: 0 4px; position: relative; }
.avp::before { content: ""; position: absolute; left: 0; right: 0; top: 0; height: 1px; background: repeating-linear-gradient(90deg, #9db4d6 0 9px, #fff 9px 11px); }
.avp h2 { height: 46px; line-height: 42px; }
.avp table { width: 100%; border-collapse: collapse; table-layout: fixed; border-right: 1px solid #ccc; }
.avp col.c0 { width: 101px; }
.avp thead th { height: 20px; padding: 2px 0 0 34px; font-weight: 400; text-align: left; border-bottom: 1px solid #ccc; border-right: 1px solid #ccc; }
.avp thead svg { display: inline; }
.avp tbody th { font-weight: 400; color: #777; text-align: right; padding: 0 6px 0 0; border-right: 1px solid #ccc; white-space: nowrap; }
.avp td { height: 25px; padding: 0; text-align: center; font-weight: 700; }
.area { border-right: 1px solid #ccc; background: repeating-linear-gradient(270deg, #fff 0 46px, #eee 46px 47px); }
.prodc { background: repeating-linear-gradient(90deg, #fff 0 39px, #eee 39px 40px); border-left: 1px solid #ccc; }
.mid { background: repeating-linear-gradient(#c4c4c4 0 3px, #fff 3px 5px) center / 1px 100% no-repeat; }
.bar { height: 19px; font-size: 13px; line-height: 19px; color: #fff; margin-left: auto; white-space: nowrap; }
.bar.dark { color: #111; }
.prodc .bar { margin-left: 0; color: #000; text-align: left; }
.prodc .big { color: #fff; text-align: center; }

.tabs { display: flex; height: 31px; flex: none; background: #e6e6e6; border-top: 1px solid #bbb; border-bottom: 1px solid #ccc; color: #666; position: relative; }
.tabs button { display: flex; align-items: center; justify-content: center; gap: 5px; border-right: 1px solid #c8c8c8; }
.tabs .src { width: 129px; justify-content: flex-start; padding-left: 9px; }
.tabs .sh { width: 57px; }
.tabs .d { width: 103px; }
.tabs .s { width: 73px; }
.tabs .new { width: 32px; }
.tabs .on { background: #fafafa; font-weight: 600; color: #555; }
.status { display: flex; justify-content: flex-end; height: 20px; flex: none; background: #eaeaea; }
.status > * { border-left: 1px solid #ccc; }
.status i { width: 27px; }
.status .wide { width: 47px; }
.user { width: 127px; display: flex; align-items: center; padding: 0 7px 0 5px; gap: 9px; font-size: 11px; color: #333; }
.user svg:last-child { margin-left: auto; }
.pager { width: 71px; display: flex; align-items: center; justify-content: space-evenly; }
.views { width: 68px; display: flex; align-items: center; justify-content: space-evenly; }

.taskbar { display: flex; height: 40px; flex: none; background: #060d14; color: #fff; }
.start { width: 48px; display: grid; place-items: center; }
.search { width: 344px; background: #f2f2f2; border-top: 1px solid #bbb; display: flex; align-items: center; padding: 0 14px 0 9px; gap: 9px; color: #333; }
.search input { flex: 1; min-width: 0; border: 0; outline: 0; background: none; padding: 0; font: 14px/20px "Noto Sans", sans-serif; }
.search input::placeholder { color: #333; opacity: 1; }
.app-ic { position: relative; width: 49px; display: grid; place-items: center; }
.active { background: #3b4148; border-bottom: 3px solid #f7cf80; }
.open { border-bottom: 3px solid #f7cf80; }
.open b { position: absolute; left: 27px; top: 18px; font: 10px/12px "Liberation Sans", Arial, sans-serif; }
.tray { margin-left: auto; display: flex; align-items: center; gap: 9px; font-size: 11px; }
.ppl { margin-right: 10px; }
.tray time { width: 69px; text-align: center; line-height: 18px; }
.notify { width: 41px; margin: 0 12px 0 0; background: #1b2229; display: grid; place-items: center; }
</style>
